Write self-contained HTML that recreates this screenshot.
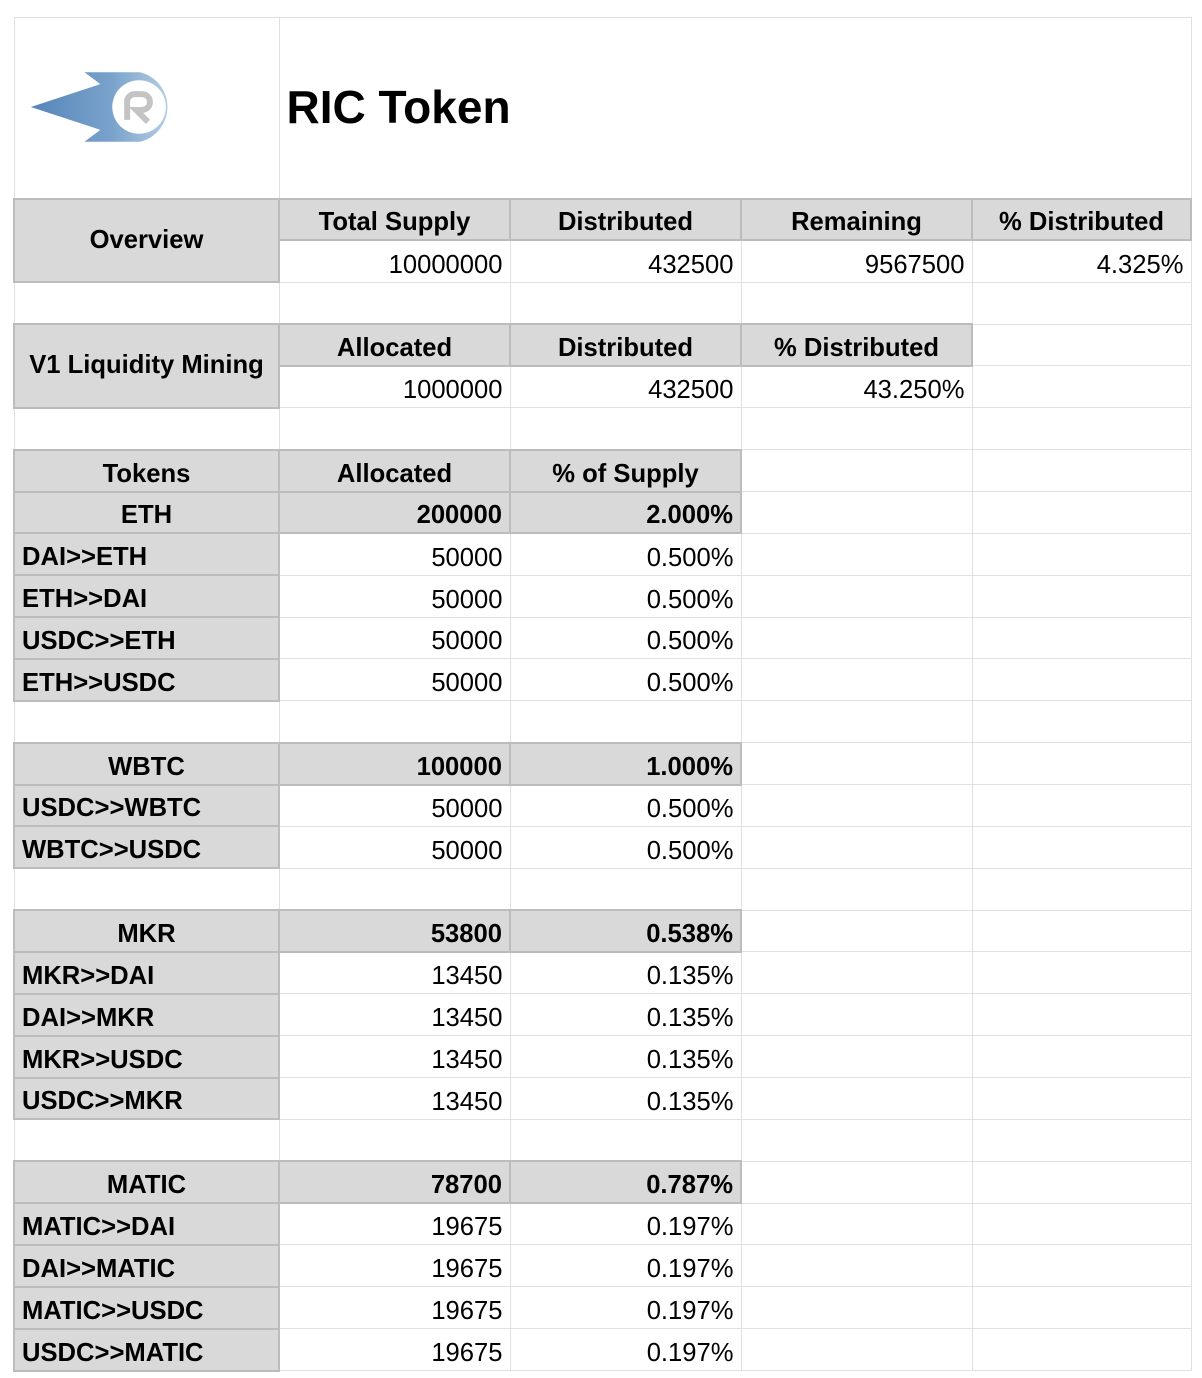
<!DOCTYPE html>
<html><head><meta charset="utf-8"><style>
body{margin:0;background:#fff;font-family:"Liberation Sans",Arial,sans-serif;}
table{position:absolute;left:13px;top:17px;border-collapse:collapse;table-layout:fixed;}
td{border:1px solid #e0e0e0;height:41.86px;padding:0 7px;font-size:25.6px;color:#000;white-space:nowrap;overflow:hidden;vertical-align:bottom;padding-bottom:2px;box-sizing:border-box;}
td.g{background:#d9d9d9;border:2px solid #bcbcbc;font-weight:bold;}
td.c{text-align:center;}
td.r{text-align:right;}
td.m{vertical-align:middle;padding-bottom:0;}
</style></head><body>
<table>
<colgroup><col style="width:265px"><col style="width:231px"><col style="width:231px"><col style="width:231px"><col style="width:219px"></colgroup>
<tr><td style="height:181px;vertical-align:middle;padding:0">
<svg width="264" height="160" viewBox="0 10 266 160" style="display:block"><defs><linearGradient id="a" x1="0" x2="1"><stop offset="0" stop-color="#5585b8"/><stop offset="0.6" stop-color="#7aa3cc"/><stop offset="1" stop-color="#b5cde3"/></linearGradient></defs>
<path d="M16 89 L86 66 L70 54 L126 54 A36 36 0 0 1 126 124 L70 124 L86 112 Z" fill="url(#a)"/>
<circle cx="125" cy="89" r="27" fill="#fff"/>
<path d="M113 102 V82 A8 8 0 0 1 121 76 H128 A8 8 0 0 1 128 92 H122 L134 104" fill="none" stroke="#c4c4c4" stroke-width="6"/></svg></td>
<td colspan="4" style="vertical-align:middle;font-size:46px;font-weight:bold;padding-left:7px">RIC Token</td></tr>
<tr><td class="g c m" rowspan="2">Overview</td><td class="g c">Total Supply</td><td class="g c">Distributed</td><td class="g c">Remaining</td><td class="g c">% Distributed</td></tr>
<tr><td class="r">10000000</td><td class="r">432500</td><td class="r">9567500</td><td class="r">4.325%</td></tr>
<tr><td></td><td></td><td></td><td></td><td></td></tr>
<tr><td class="g c m" rowspan="2">V1 Liquidity Mining</td><td class="g c">Allocated</td><td class="g c">Distributed</td><td class="g c">% Distributed</td><td></td></tr>
<tr><td class="r">1000000</td><td class="r">432500</td><td class="r">43.250%</td><td></td></tr>
<tr><td></td><td></td><td></td><td></td><td></td></tr>
<tr><td class="g c">Tokens</td><td class="g c">Allocated</td><td class="g c">% of Supply</td><td></td><td></td></tr>
<tr><td class="g c">ETH</td><td class="g r">200000</td><td class="g r">2.000%</td><td></td><td></td></tr>
<tr><td class="g">DAI&gt;&gt;ETH</td><td class="r">50000</td><td class="r">0.500%</td><td></td><td></td></tr>
<tr><td class="g">ETH&gt;&gt;DAI</td><td class="r">50000</td><td class="r">0.500%</td><td></td><td></td></tr>
<tr><td class="g">USDC&gt;&gt;ETH</td><td class="r">50000</td><td class="r">0.500%</td><td></td><td></td></tr>
<tr><td class="g">ETH&gt;&gt;USDC</td><td class="r">50000</td><td class="r">0.500%</td><td></td><td></td></tr>
<tr><td></td><td></td><td></td><td></td><td></td></tr>
<tr><td class="g c">WBTC</td><td class="g r">100000</td><td class="g r">1.000%</td><td></td><td></td></tr>
<tr><td class="g">USDC&gt;&gt;WBTC</td><td class="r">50000</td><td class="r">0.500%</td><td></td><td></td></tr>
<tr><td class="g">WBTC&gt;&gt;USDC</td><td class="r">50000</td><td class="r">0.500%</td><td></td><td></td></tr>
<tr><td></td><td></td><td></td><td></td><td></td></tr>
<tr><td class="g c">MKR</td><td class="g r">53800</td><td class="g r">0.538%</td><td></td><td></td></tr>
<tr><td class="g">MKR&gt;&gt;DAI</td><td class="r">13450</td><td class="r">0.135%</td><td></td><td></td></tr>
<tr><td class="g">DAI&gt;&gt;MKR</td><td class="r">13450</td><td class="r">0.135%</td><td></td><td></td></tr>
<tr><td class="g">MKR&gt;&gt;USDC</td><td class="r">13450</td><td class="r">0.135%</td><td></td><td></td></tr>
<tr><td class="g">USDC&gt;&gt;MKR</td><td class="r">13450</td><td class="r">0.135%</td><td></td><td></td></tr>
<tr><td></td><td></td><td></td><td></td><td></td></tr>
<tr><td class="g c">MATIC</td><td class="g r">78700</td><td class="g r">0.787%</td><td></td><td></td></tr>
<tr><td class="g">MATIC&gt;&gt;DAI</td><td class="r">19675</td><td class="r">0.197%</td><td></td><td></td></tr>
<tr><td class="g">DAI&gt;&gt;MATIC</td><td class="r">19675</td><td class="r">0.197%</td><td></td><td></td></tr>
<tr><td class="g">MATIC&gt;&gt;USDC</td><td class="r">19675</td><td class="r">0.197%</td><td></td><td></td></tr>
<tr><td class="g">USDC&gt;&gt;MATIC</td><td class="r">19675</td><td class="r">0.197%</td><td></td><td></td></tr>
</table>
</body></html>
